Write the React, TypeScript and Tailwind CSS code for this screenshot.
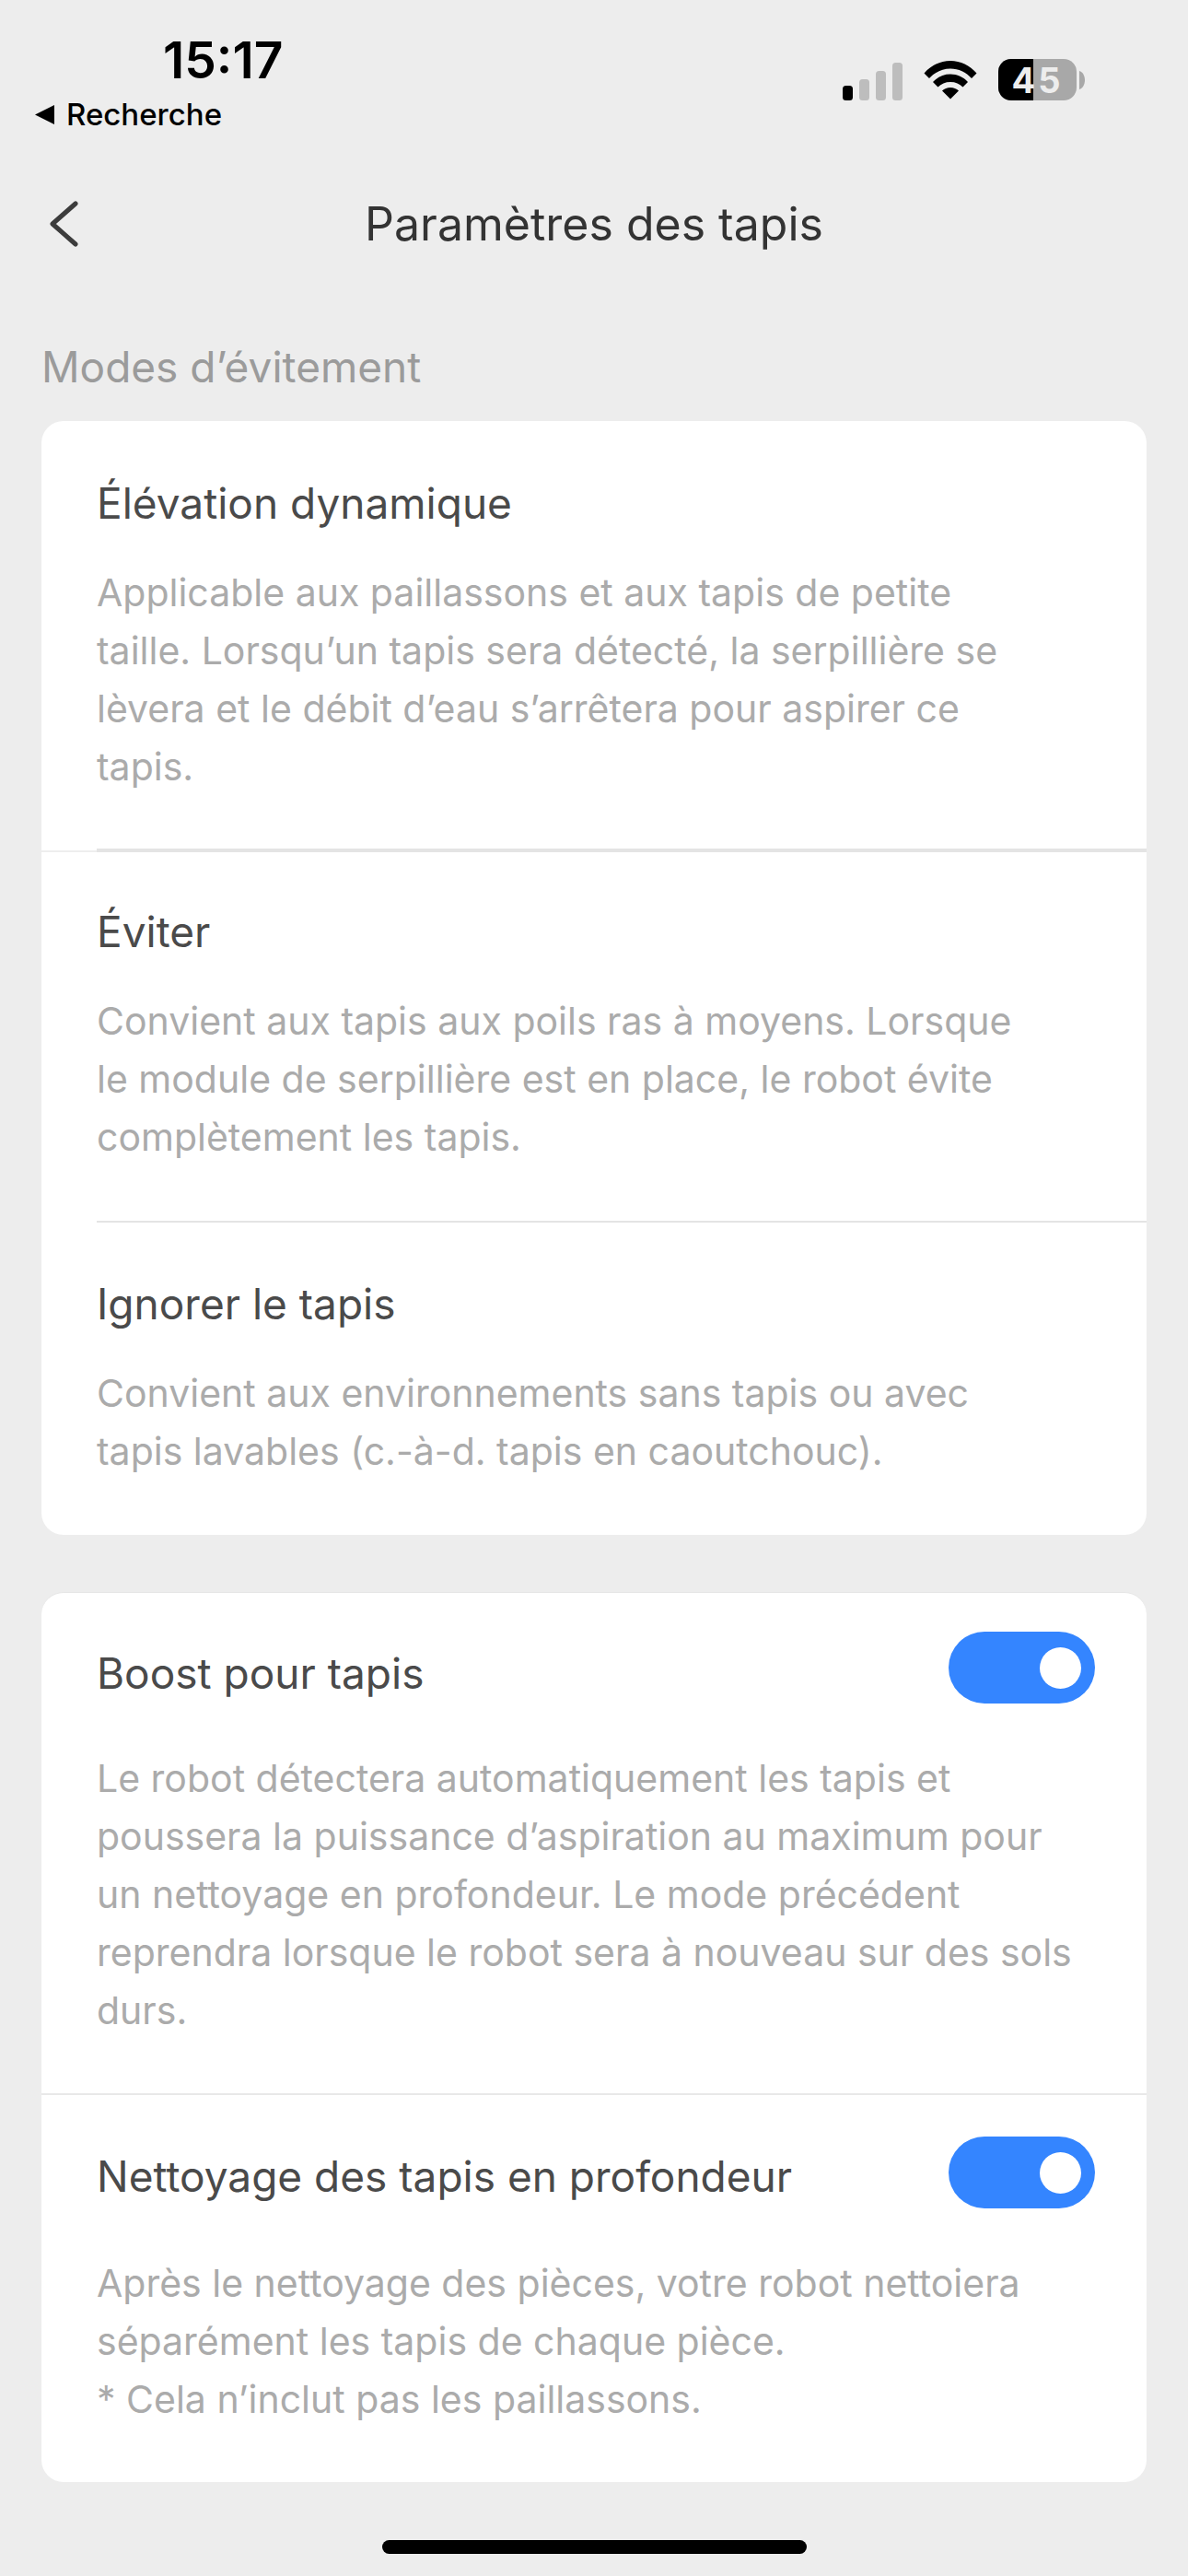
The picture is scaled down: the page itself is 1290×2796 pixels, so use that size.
const Toggle = () => (
  <div className="flex h-[78px] w-[159px] shrink-0 items-center justify-end rounded-full bg-[#3485ff] pr-[15px]">
    <div className="h-[45px] w-[45px] rounded-full bg-white" />
  </div>
);

const Desc = ({ lines }: { lines: string[] }) => (
  <div className="text-[41px] leading-[63px] text-[#ababab]">
    {lines.map((l) => (
      <div key={l} className="whitespace-nowrap">{l}</div>
    ))}
  </div>
);

const Title = ({ children }: { children: string }) => (
  <div className="text-[46px] leading-[60px] text-[#4a4a4a] whitespace-nowrap">{children}</div>
);

export default function App() {
  return (
    <div className="flex h-[2796px] w-[1290px] flex-col overflow-hidden bg-[#ededed] font-['Inter',sans-serif]">
      <div className="flex h-[160px] shrink-0 items-start justify-between">
        <div className="flex flex-col">
          <div className="mt-[37px] ml-[177px] text-[55px] font-semibold leading-[56px] text-black">15:17</div>
          <div className="mt-[12px] ml-[38px] flex items-center gap-[13px]">
            <svg width="21" height="21" viewBox="0 0 21 21"><path d="M21 0V21L0 10.5Z" fill="#000" /></svg>
            <span className="text-[33px] font-medium leading-[38px] text-black">Recherche</span>
          </div>
        </div>
        <div className="mt-[64px] mr-[112px] flex items-start">
          <svg width="65" height="43" viewBox="0 0 65 43" className="mt-[2px]">
            <rect x="0" y="27" width="11" height="16" rx="3.5" fill="#000" />
            <rect x="18" y="20" width="11" height="23" rx="3.5" fill="#bdbdbd" />
            <rect x="36" y="11" width="11" height="32" rx="3.5" fill="#bdbdbd" />
            <rect x="54" y="2" width="11" height="41" rx="3.5" fill="#bdbdbd" />
          </svg>
          <svg width="58" height="43" viewBox="0 0 58 43" className="mt-[1px] ml-[23px]">
            <path d="M0.5 14.5C8 6 18 1 29 1S50 6 57.5 14.5L52 20C46 13.5 38 9.5 29 9.5S12 13.5 6 20Z" fill="#000" />
            <path d="M10 24C15 18.5 21.5 15.5 29 15.5S43 18.5 48 24L42.5 29.5C39 26 34.500 24 29 24S19 26 15.500 29.500Z" fill="#000" />
            <path d="M20 33.500C22.500 31.500 25.500 30 29 30S35.500 31.500 38 33.500L29 42.500Z" fill="#000" />
          </svg>
          <div className="relative ml-[23px] flex h-[45px] w-[85px] overflow-hidden rounded-[14px] bg-[#a8a8a8]">
            <div className="h-full w-[38px] bg-black" />
            <span className="absolute inset-0 flex items-center justify-center text-[38px] font-bold leading-none tracking-[3px] text-[#ededed]">45</span>
          </div>
          <svg width="6" height="20" viewBox="0 0 6 20" className="mt-[13px] ml-[3px]">
            <path d="M0 0C3.500 1 6 5 6 10S3.500 19 0 20Z" fill="#a8a8a8" />
          </svg>
        </div>
      </div>

      <div className="mt-[40px] flex h-[86px] shrink-0 items-center justify-center">
        <svg width="34" height="50" viewBox="0 0 34 50" className="ml-[52px] shrink-0 fill-none stroke-[#3c3c3c] stroke-[5px]">
          <path d="M30 3L5 25L30 47" strokeLinecap="round" strokeLinejoin="round" />
        </svg>
        <div className="flex-1 pr-[86px] text-center text-[50px] leading-[60px] text-[#333333]">Paramètres des tapis</div>
      </div>

      <div className="mt-[82px] ml-[45px] text-[46px] leading-[60px] text-[#9b9b9b]">Modes d’évitement</div>

      <div className="mt-[29px] mx-[45px] flex h-[1209px] shrink-0 flex-col rounded-[24px] bg-white">
        <div className="h-[464px] pl-[60px] pt-[59px]">
          <Title>Élévation dynamique</Title>
          <div className="mt-[36px]">
            <Desc lines={["Applicable aux paillassons et aux tapis de petite", "taille. Lorsqu’un tapis sera détecté, la serpillière se", "lèvera et le débit d’eau s’arrêtera pour aspirer ce", "tapis."]} />
          </div>
        </div>
        <div className="flex h-[4px] items-end">
          <div className="h-[2px] w-[60px] bg-[#eeeeee]" />
          <div className="h-[4px] flex-1 bg-[#e4e4e4]" />
        </div>
        <div className="h-[400px] pl-[60px] pt-[56px]">
          <Title>Éviter</Title>
          <div className="mt-[36px]">
            <Desc lines={["Convient aux tapis aux poils ras à moyens. Lorsque", "le module de serpillière est en place, le robot évite", "complètement les tapis."]} />
          </div>
        </div>
        <div className="ml-[60px] h-[2px] bg-[#e4e4e4]" />
        <div className="pl-[60px] pt-[58px]">
          <Title>Ignorer le tapis</Title>
          <div className="mt-[36px]">
            <Desc lines={["Convient aux environnements sans tapis ou avec", "tapis lavables (c.-à-d. tapis en caoutchouc)."]} />
          </div>
        </div>
      </div>

      <div className="mt-[62px] mx-[45px] flex h-[966px] shrink-0 flex-col rounded-[24px] border-t border-[#e6e6e6] bg-white">
        <div className="h-[543px] pl-[60px] pr-[56px] pt-[42px]">
          <div className="flex items-start justify-between">
            <div className="mt-[15px]"><Title>Boost pour tapis</Title></div>
            <Toggle />
          </div>
          <div className="mt-[50px]">
            <Desc lines={["Le robot détectera automatiquement les tapis et", "poussera la puissance d’aspiration au maximum pour", "un nettoyage en profondeur. Le mode précédent", "reprendra lorsque le robot sera à nouveau sur des sols", "durs."]} />
          </div>
        </div>
        <div className="h-[2px] bg-[#e8e8e8]" />
        <div className="pl-[60px] pr-[56px] pt-[45px]">
          <div className="flex items-start justify-between">
            <div className="mt-[13px]"><Title>Nettoyage des tapis en profondeur</Title></div>
            <Toggle />
          </div>
          <div className="mt-[50px]">
            <Desc lines={["Après le nettoyage des pièces, votre robot nettoiera", "séparément les tapis de chaque pièce.", "* Cela n’inclut pas les paillassons."]} />
          </div>
        </div>
      </div>

      <div className="mt-[63px] mx-auto h-[15px] w-[461px] rounded-full bg-black" />
    </div>
  );
}
